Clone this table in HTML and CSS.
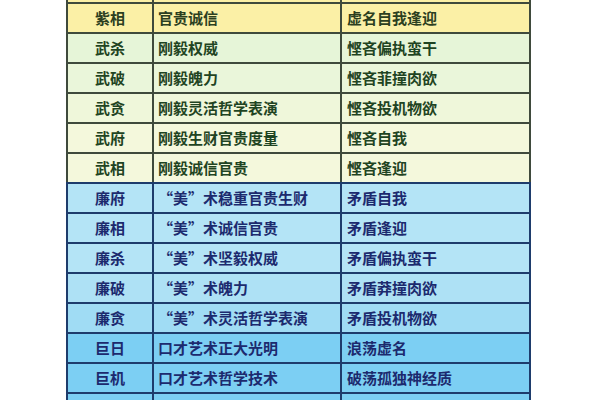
FILE: index.html
```html
<!DOCTYPE html>
<html lang="zh">
<head>
<meta charset="utf-8">
<link rel="stylesheet" href="styles.css">
</head>
<body>
<div class="sheet">
  <div class="row stub yellow"><div class="c1"></div><div class="c2"></div><div class="c3"></div></div>
  <div class="row yellow"><div class="c1">紫相</div><div class="c2">官贵诚信</div><div class="c3">虚名自我逢迎</div></div>
  <div class="row green g1"><div class="c1">武杀</div><div class="c2">刚毅权威</div><div class="c3">悭吝偏执蛮干</div></div>
  <div class="row green g2"><div class="c1">武破</div><div class="c2">刚毅魄力</div><div class="c3">悭吝菲撞肉欲</div></div>
  <div class="row green g3"><div class="c1">武贪</div><div class="c2">刚毅灵活哲学表演</div><div class="c3">悭吝投机物欲</div></div>
  <div class="row green g4"><div class="c1">武府</div><div class="c2">刚毅生财官贵度量</div><div class="c3">悭吝自我</div></div>
  <div class="row green g4"><div class="c1">武相</div><div class="c2">刚毅诚信官贵</div><div class="c3">悭吝逢迎</div></div>
  <div class="row blue b1"><div class="c1">廉府</div><div class="c2">“美”术稳重官贵生财</div><div class="c3">矛盾自我</div></div>
  <div class="row blue b1"><div class="c1">廉相</div><div class="c2">“美”术诚信官贵</div><div class="c3">矛盾逢迎</div></div>
  <div class="row blue b1"><div class="c1">廉杀</div><div class="c2">“美”术坚毅权威</div><div class="c3">矛盾偏执蛮干</div></div>
  <div class="row blue b2"><div class="c1">廉破</div><div class="c2">“美”术魄力</div><div class="c3">矛盾莽撞肉欲</div></div>
  <div class="row blue b3"><div class="c1">廉贪</div><div class="c2">“美”术灵活哲学表演</div><div class="c3">矛盾投机物欲</div></div>
  <div class="row blue b4"><div class="c1">巨日</div><div class="c2">口才艺术正大光明</div><div class="c3">浪荡虚名</div></div>
  <div class="row blue b4"><div class="c1">巨机</div><div class="c2">口才艺术哲学技术</div><div class="c3">破荡孤独神经质</div></div>
  <div class="row blue b4 tail"><div class="c1"></div><div class="c2"></div><div class="c3"></div></div>
</div>
</body>
</html>
```
FILE: styles.css
```css
html, body {
  margin: 0;
  padding: 0;
  background: #ffffff;
  height: 400px;
  overflow: hidden;
}

.sheet {
  margin-left: 66px;
  width: 465px;
  height: 400px;
  overflow: hidden;
  font-family: "Noto Sans CJK SC", "Noto Sans", sans-serif;
  font-weight: 700;
  font-size: 15px;
}

.row {
  display: grid;
  grid-template-columns: 86px 188px 189px;
  height: 30px;
  box-sizing: border-box;
  border-top: 2px solid #3f4a3c;
  border-left: 2px solid #3f4a3c;
}

.row.stub {
  height: 2px;
  border-top: 0;
}

.row.tail {
  height: 8px;
}

.row > div {
  box-sizing: border-box;
  border-right: 2px solid #3f4a3c;
  display: flex;
  align-items: center;
  line-height: 28px;
  white-space: nowrap;
  overflow: hidden;
}

.c1 { justify-content: center; }
.c2 { padding-left: 4px; }
.c3 { padding-left: 5px; }

.yellow { background: #fbf0a6; color: #2c3f1f; }
.green { color: #1f4422; }
.g1 { background: #e6f5d8; }
.g2 { background: #eaf6da; }
.g3 { background: #eff7da; }
.g4 { background: #f4f8dc; }

.blue { color: #1c2a6e; border-color: #1e3c6c; }
.blue > div { border-right-color: #1e3c6c; }
.b1 { background: #b4e4f6; }
.b2 { background: #aee1f5; }
.b3 { background: #a0dcf4; }
.b4 { background: #7ccff3; }
```
